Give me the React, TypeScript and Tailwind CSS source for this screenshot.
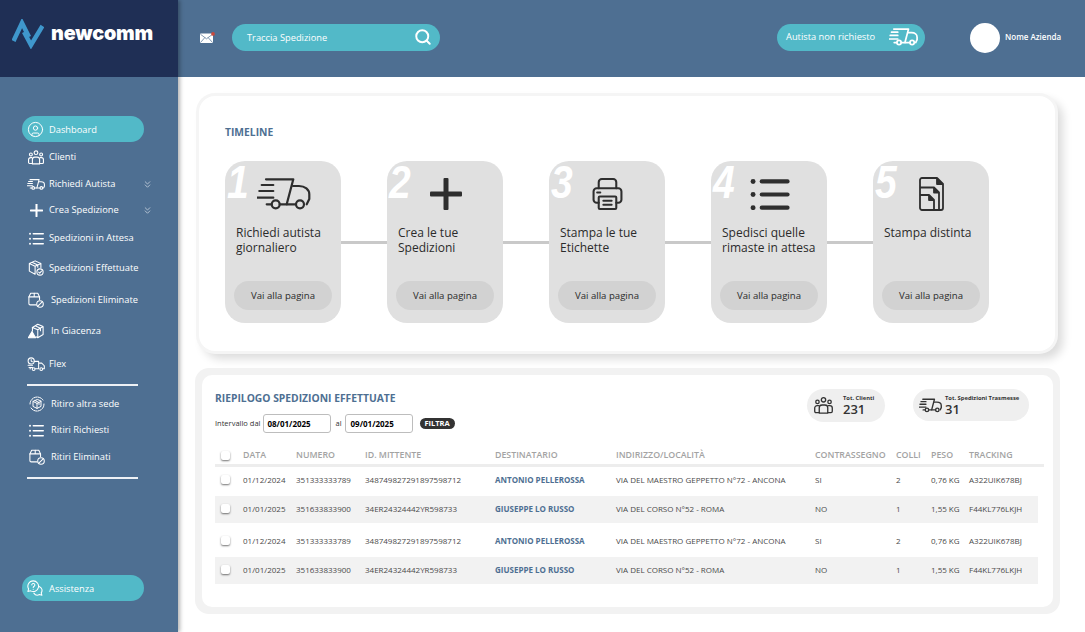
import { ChevronsDown, CircleUser, Search } from "lucide-react";

type IconProps = { className?: string };

function FastTruck({ className }: IconProps) {
  return (
    <svg viewBox="0 0 54 32" fill="none" stroke="currentColor" strokeWidth="2.2" strokeLinecap="round" strokeLinejoin="round" className={className}>
      <path d="M9 1.3h27.3l-6.6 25" />
      <path d="M36 8h6c6 0 10.3 3.5 10.3 8.3V21l-2.6 5.3" />
      <circle cx="18.7" cy="26.3" r="4" />
      <circle cx="43" cy="26.3" r="4" />
      <path d="M9.7 26.3h5M22.7 26.3H39M4.7 7h11.6M2.3 13h14M.3 19.7h16" />
    </svg>
  );
}

function ListIcon({ className }: IconProps) {
  return (
    <svg viewBox="0 0 38 31" fill="currentColor" className={className}>
      <circle cx="2.6" cy="3.3" r="2.4" />
      <circle cx="2.6" cy="16" r="2.4" />
      <circle cx="2.6" cy="28.7" r="2.4" />
      <rect x="9" y="1.3" width="29" height="4" rx="2" />
      <rect x="9" y="14" width="29" height="4" rx="2" />
      <rect x="9" y="26.7" width="29" height="4" rx="2" />
    </svg>
  );
}

function PlusIcon({ className }: IconProps) {
  return (
    <svg viewBox="0 0 32 32" fill="currentColor" className={className}>
      <rect x="13.5" y="0" width="5" height="32" rx="1" />
      <rect x="0" y="13.5" width="32" height="5" rx="1" />
    </svg>
  );
}

function PrinterIcon({ className }: IconProps) {
  return (
    <svg viewBox="0 0 29 31" fill="none" stroke="currentColor" strokeWidth="2" strokeLinecap="round" strokeLinejoin="round" className={className}>
      <path d="M6 10V4a3 3 0 0 1 3-3h11a3 3 0 0 1 3 3v6" />
      <path d="M6 24H4a3 3 0 0 1-3-3v-8a3 3 0 0 1 3-3h21a3 3 0 0 1 3 3v8a3 3 0 0 1-3 3h-2" />
      <rect x="6" y="18" width="17" height="12" rx="1" />
      <path d="M10.5 22h8M10.5 26h8M4.5 14h3" />
    </svg>
  );
}

function DocsIcon({ className }: IconProps) {
  return (
    <svg viewBox="0 0 25 34" fill="none" stroke="currentColor" strokeWidth="1.8" strokeLinejoin="round" className={className}>
      <path d="M3 1h15l6 6v24a2 2 0 0 1-2 2H3a2 2 0 0 1-2-2V3a2 2 0 0 1 2-2z" />
      <path d="M1 10.5h14l5 5V33" />
      <path d="M1 18h9l5 5v10" />
      <path d="M18 1v6h6M15 10.5v5h5M10 18v5h5" fill="currentColor" />
    </svg>
  );
}

function PeopleIcon({ className }: IconProps) {
  return (
    <svg viewBox="0 0 20 18" fill="none" stroke="currentColor" strokeWidth="1.4" strokeLinecap="round" strokeLinejoin="round" className={className}>
      <circle cx="10" cy="3" r="2.3" />
      <circle cx="3.6" cy="5.2" r="1.8" />
      <circle cx="16.4" cy="5.2" r="1.8" />
      <path d="M5.5 17v-5.5A3 3 0 0 1 8.5 8.5h3a3 3 0 0 1 3 3V17z" />
      <path d="M5.5 16.5H2a1.3 1.3 0 0 1-1.3-1.3v-3.5A2.5 2.5 0 0 1 3.2 9.2h1.6M14.5 16.5H18a1.3 1.3 0 0 0 1.3-1.3v-3.5a2.5 2.5 0 0 0-2.5-2.5h-1.6" />
    </svg>
  );
}

function BoxCheck({ className }: IconProps) {
  return (
    <svg viewBox="0 0 18 18" fill="none" stroke="currentColor" strokeWidth="1.2" strokeLinecap="round" strokeLinejoin="round" className={className}>
      <path d="M8 1 1.5 4v8.5L8 16M8 1l6.5 3v4.5M1.5 4 8 7l6.5-3M8 7v9M4.5 2.6 11 5.7v2.5" />
      <circle cx="13.5" cy="13.5" r="3.5" />
      <path d="m12 13.6 1.2 1.2 2-2.3" />
    </svg>
  );
}

function BoxBan({ className }: IconProps) {
  return (
    <svg viewBox="0 0 18 18" fill="none" stroke="currentColor" strokeWidth="1.2" strokeLinecap="round" strokeLinejoin="round" className={className}>
      <path d="M9 14.5H2.5A1.5 1.5 0 0 1 1 13V5.5L3 1.5h8l2 4v3" />
      <path d="M1 5.5h12M7 1.5v4" />
      <circle cx="13.5" cy="13.5" r="3.7" />
      <path d="m11 16 5-5" />
    </svg>
  );
}

function BoxAlert({ className }: IconProps) {
  return (
    <svg viewBox="0 0 18 18" fill="none" stroke="currentColor" strokeWidth="1.2" strokeLinecap="round" strokeLinejoin="round" className={className}>
      <path d="m5 5 6-3.5L17 4v9l-6 3.5-2-1M5 5l6 2.5L17 4M11 7.5v9M8 3.2l6 2.6v3" />
      <path d="M5 5v4" />
      <path d="M4.5 9.5 8.5 16.5H.5z" fill="currentColor" />
    </svg>
  );
}

function FlexTruck({ className }: IconProps) {
  return (
    <svg viewBox="0 0 20 16" fill="none" stroke="currentColor" strokeWidth="1.2" strokeLinecap="round" strokeLinejoin="round" className={className}>
      <circle cx="4.5" cy="4.5" r="3.5" />
      <path d="M4.5 2.8v1.9l1.3.8M8 5h5v8.5H9M13 7h3.5l3 3v3.5h-1.5M1 9.5h5M2 12h4M3 13.5h1" />
      <circle cx="7.3" cy="13.8" r="1.6" />
      <circle cx="16" cy="13.8" r="1.6" />
    </svg>
  );
}

function RoundBox({ className }: IconProps) {
  return (
    <svg viewBox="0 0 16 16" fill="none" stroke="currentColor" strokeWidth="1" strokeLinecap="round" strokeLinejoin="round" className={className}>
      <path d="M2 4.5A7.2 7.2 0 0 1 14 4M14.4 11A7.2 7.2 0 0 1 2 12" strokeDasharray="3 1" />
      <path d="M1 8a7 7 0 0 1 .5-2.5M15 8a7 7 0 0 1-.4 2.4" />
      <path d="M8 3.6 4 5.4v5L8 12.4l4-2v-5zM4 5.4l4 2 4-2M8 7.4v5M6 4.5l4 2v2" />
    </svg>
  );
}

function HelpChat({ className }: IconProps) {
  return (
    <svg viewBox="0 0 18 18" fill="none" stroke="currentColor" strokeWidth="1.2" strokeLinecap="round" strokeLinejoin="round" className={className}>
      <path d="M7 1a6 6 0 0 0-5.2 9L1 13l3-.8A6 6 0 1 0 7 1z" />
      <path d="M13.7 7.2a4.8 4.8 0 0 1 2.3 7.3l.8 2.7-2.8-.8a4.8 4.8 0 0 1-6.3-1.6" />
      <path d="M5.4 5.5a1.7 1.7 0 1 1 2.6 1.5c-.7.4-1 .8-1 1.5M7 10.4v.1" />
    </svg>
  );
}

function MailIcon({ className }: IconProps) {
  return (
    <svg viewBox="0 0 15 11" className={className}>
      <rect x="0" y="1.5" width="13" height="9.5" rx="0.8" fill="#fff" />
      <path d="M.5 2.3 6.5 6.8l6-4.5M.5 10.5l4.4-5M12.5 10.5l-4.4-5" fill="none" stroke="#4e6f92" strokeWidth="0.7" />
      <circle cx="13" cy="1.9" r="1.9" fill="#c8483c" />
    </svg>
  );
}

const thick = "stroke-[3.2]";

const navTop = [
  { label: "Clienti", icon: <PeopleIcon className="h-[15px] w-[16px]" />, row: "mt-[2px]", text: "", more: false },
  { label: "Richiedi Autista", icon: <FastTruck className={`h-[13px] w-[18px] ${thick}`} />, row: "mt-px", text: "", more: true },
  { label: "Crea Spedizione", icon: <PlusIcon className="h-[13px] w-[13px]" />, row: "", text: "", more: true },
  { label: "Spedizioni in Attesa", icon: <ListIcon className="h-[13px] w-[15px]" />, row: "mt-[2px]", text: "", more: false },
  { label: "Spedizioni Effettuate", icon: <BoxCheck className="h-[16px] w-[16px]" />, row: "mt-[4px]", text: "", more: false },
  { label: "Spedizioni Eliminate", icon: <BoxBan className="h-[16px] w-[16px]" />, row: "mt-[6px]", text: "ml-[2px]", more: false },
  { label: "In Giacenza", icon: <BoxAlert className="h-[16px] w-[16px]" />, row: "mt-[5px]", text: "ml-[2px]", more: false },
  { label: "Flex", icon: <FlexTruck className="h-[14px] w-[18px]" />, row: "mt-[7px]", text: "", more: false },
];

const navBottom = [
  { label: "Ritiro altra sede", icon: <RoundBox className="h-[16px] w-[16px]" />, row: "mt-[5px]" },
  { label: "Ritiri Richiesti", icon: <ListIcon className="h-[13px] w-[15px]" />, row: "mt-0" },
  { label: "Ritiri Eliminati", icon: <BoxBan className="h-[16px] w-[16px]" />, row: "mt-px" },
];

const steps = [
  { n: "1", title: "Richiedi autista giornaliero", icon: <FastTruck className="ml-[23px] h-[32px] w-[54px]" /> },
  { n: "2", title: "Crea le tue Spedizioni", icon: <PlusIcon className="ml-[34px] h-[32px] w-[32px]" /> },
  { n: "3", title: "Stampa le tue Etichette", icon: <PrinterIcon className="ml-[34px] h-[32px] w-[31px]" /> },
  { n: "4", title: "Spedisci quelle rimaste in attesa", icon: <ListIcon className="ml-[30px] h-[32px] w-[40px]" /> },
  { n: "5", title: "Stampa distinta", icon: <DocsIcon className="ml-[36px] h-[34px] w-[27px]" /> },
];

const rows = [
  { data: "01/12/2024", num: "351333333789", id: "348749827291897598712", dest: "ANTONIO PELLEROSSA", addr: "VIA DEL MAESTRO GEPPETTO N°72 - ANCONA", c: "SI", colli: "2", peso: "0,76 KG", track: "A322UIK678BJ", cls: "bg-white", mt: "mt-0" },
  { data: "01/01/2025", num: "351633833900", id: "34ER24324442YR598733", dest: "GIUSEPPE LO RUSSO", addr: "VIA DEL CORSO N°52 - ROMA", c: "NO", colli: "1", peso: "1,55 KG", track: "F44KL776LKJH", cls: "bg-[#f2f2f2]", mt: "mt-[2px]" },
  { data: "01/12/2024", num: "351333333789", id: "348749827291897598712", dest: "ANTONIO PELLEROSSA", addr: "VIA DEL MAESTRO GEPPETTO N°72 - ANCONA", c: "SI", colli: "2", peso: "0,76 KG", track: "A322UIK678BJ", cls: "bg-white", mt: "mt-[5px]" },
  { data: "01/01/2025", num: "351633833900", id: "34ER24324442YR598733", dest: "GIUSEPPE LO RUSSO", addr: "VIA DEL CORSO N°52 - ROMA", c: "NO", colli: "1", peso: "1,55 KG", track: "F44KL776LKJH", cls: "bg-[#f2f2f2]", mt: "mt-[2px]" },
];

const gridCols = "grid grid-cols-[28px_53px_69px_130px_121px_199px_81px_35px_38px_69px] items-center";

function Checkbox() {
  return <span className="ml-[6px] block h-[9px] w-[9px] rounded-[2px] bg-white shadow-[0_1px_2px_rgba(0,0,0,0.55)]" />;
}

export default function App() {
  return (
    <div className="flex h-[632px] w-[1085px] overflow-hidden bg-white font-['Open_Sans',sans-serif] text-[#333]">
      {/* colonna sinistra */}
      <aside className="z-10 flex w-[178px] shrink-0 flex-col bg-[#4e6f92] text-white shadow-[2px_0_4px_rgba(0,0,0,0.3)]">
        <div className="flex h-[77px] items-start bg-[#1f2f55] pl-[12px] pt-[19px]">
          <svg viewBox="0 0 32 30" className="h-[30px] w-[32px]" fill="none" stroke="#3f97cc" strokeWidth="4.5">
            <path d="M1.5 22 10 4l7 14" />
            <path d="M30.5 7 19 26l-7-13" />
          </svg>
          <span className="ml-[7px] mt-[1px] font-['Inter',sans-serif] text-[19.8px] font-black leading-[26px] tracking-[-0.2px]">newcomm</span>
        </div>

        <nav className="flex flex-1 flex-col pl-[22px] pt-[39px]">
          <div className="flex h-[26px] w-[122px] items-center rounded-full bg-[#52b9c8] pl-[5px] text-[9.3px]">
            <CircleUser className="h-[17px] w-[17px]" strokeWidth={1.4} />
            <span className="ml-[5px] pt-px">Dashboard</span>
          </div>
          {navTop.map((item) => (
            <div key={item.label} className={`flex h-[26px] w-[136px] items-center text-[9.3px] ${item.row}`}>
              <span className="flex w-[27px] shrink-0 items-center justify-center pl-[1px]">{item.icon}</span>
              <span className={item.text}>{item.label}</span>
              {item.more && <ChevronsDown className="ml-auto mr-[5px] h-[11px] w-[11px] text-[#d5dde6]" strokeWidth={1.6} />}
            </div>
          ))}
          <div className="ml-[5px] mt-[7px] h-[2px] w-[111px] bg-[#eef1f5]" />
          <div className="flex flex-col">
            {navBottom.map((item) => (
              <div key={item.label} className={`flex h-[26px] items-center text-[9.3px] ${item.row}`}>
                <span className="flex w-[29px] shrink-0 items-center justify-center">{item.icon}</span>
                <span>{item.label}</span>
              </div>
            ))}
          </div>
          <div className="ml-[5px] mt-[7px] h-[2px] w-[111px] bg-[#eef1f5]" />
          <div className="mt-[96px] flex h-[26px] w-[122px] items-center rounded-full bg-[#52b9c8] pl-[5px] text-[9.3px]">
            <HelpChat className="h-[16px] w-[16px]" />
            <span className="ml-[6px] pt-px">Assistenza</span>
          </div>
        </nav>
      </aside>

      <div className="flex min-w-0 flex-1 flex-col">
        {/* barra in alto */}
        <header className="flex h-[77px] items-center bg-[#4e6f92] pb-[3px] pl-[22px] text-white">
          <MailIcon className="h-[11px] w-[15px]" />
          <div className="ml-[17px] flex h-[27px] w-[208px] items-center justify-between rounded-full bg-[#52b9c8] pl-[15px] pr-[8px] text-[9.3px]">
            <span className="pt-px">Traccia Spedizione</span>
            <Search className="h-[18px] w-[18px]" strokeWidth={2.6} />
          </div>
          <div className="ml-[337px] flex h-[27px] w-[148px] items-center justify-between rounded-full bg-[#52b9c8] pl-[9px] pr-[7px] text-[9.3px]">
            <span>Autista non richiesto</span>
            <FastTruck className={`h-[18px] w-[29px] ${thick}`} />
          </div>
          <div className="ml-[45px] mt-px h-[30px] w-[30px] rounded-full bg-white" />
          <span className="ml-[5px] text-[8px] font-semibold">Nome Azienda</span>
        </header>

        <main className="flex flex-1 flex-col">
          {/* timeline */}
          <section className="ml-[21px] mt-[19px] h-[255px] w-[856px] rounded-[16px] bg-white pl-[26px] pt-[30px] shadow-[0_0_0_3px_#f5f5f5,6px_6px_10px_2px_rgba(0,0,0,0.14)]">
            <h2 className="text-[10.3px] font-bold leading-[13px] text-[#4e6f92]">TIMELINE</h2>
            <div className="mt-[22px] flex items-center">
              {steps.map((s, i) => (
                <div key={s.n} className="flex items-center">
                  {i > 0 && <div className="h-[3px] w-[46px] bg-[#c9c9c9]" />}
                  <div className="relative flex h-[162px] w-[116px] flex-col rounded-[20px] bg-[#e0e0e0] px-[9px] pb-[13px] pt-[16px]">
                    <span className="absolute left-[2px] top-[-5px] origin-left scale-x-[0.85] font-['Liberation_Sans',sans-serif] text-[46px] font-bold italic leading-[52px] text-white">{s.n}</span>
                    <div className="flex h-[34px] items-center text-[#2e2e2e]">{s.icon}</div>
                    <p className="mt-[14px] pl-[2px] text-[12px] leading-[15px] text-[#2b2b2b]">{s.title}</p>
                    <div className="mt-auto flex h-[29px] items-center justify-center rounded-full bg-[#d2d2d2] pt-px text-[9.6px] text-[#2b2b2b]">Vai alla pagina</div>
                  </div>
                </div>
              ))}
            </div>
          </section>

          {/* riepilogo */}
          <section className="ml-[17px] mt-[17px] h-[246px] w-[865px] rounded-[14px] bg-[#f2f2f2] p-[7px]">
            <div className="h-full rounded-[10px] bg-white pl-[13px]">
              <div className="flex items-start justify-between pr-[24px] pt-[14px]">
                <div>
                  <h2 className="mt-[3px] text-[10.3px] font-bold leading-[13px] text-[#4e6f92]">RIEPILOGO SPEDIZIONI EFFETTUATE</h2>
                  <div className="mt-[9px] flex items-center text-[7.5px]">
                    <span>Intervallo dal</span>
                    <span className="ml-[3px] flex h-[19px] w-[68px] items-center rounded-[3px] border border-[#bdbdbd] pl-[3px] text-[8px] font-bold text-black">08/01/2025</span>
                    <span className="ml-[4px]">al</span>
                    <span className="ml-[3px] flex h-[19px] w-[68px] items-center rounded-[3px] border border-[#bdbdbd] pl-[5px] text-[8px] font-bold text-black">09/01/2025</span>
                    <span className="ml-[7px] flex h-[11px] w-[35px] items-center justify-center rounded-full bg-[#333] text-[7.5px] font-bold text-white">FILTRA</span>
                  </div>
                </div>
                <div className="flex items-start">
                  <div className="flex h-[33px] w-[78px] items-center rounded-full bg-[#efefef] pl-[7px]">
                    <PeopleIcon className="h-[17px] w-[19px] text-[#333]" />
                    <div className="ml-[10px]">
                      <div className="text-[5.8px] font-bold leading-[7px]">Tot. Clienti</div>
                      <div className="text-[13px] font-semibold leading-[14px]">231</div>
                    </div>
                  </div>
                  <div className="ml-[28px] flex h-[32px] w-[116px] items-center rounded-full bg-[#efefef] pl-[6px]">
                    <FastTruck className={`h-[15px] w-[23px] text-[#333] ${thick}`} />
                    <div className="ml-[3px]">
                      <div className="text-[5.8px] font-bold leading-[7px]">Tot. Spedizioni Trasmesse</div>
                      <div className="text-[13px] font-semibold leading-[14px]">31</div>
                    </div>
                  </div>
                </div>
              </div>

              <div className="mt-[12px]">
                <div className={`${gridCols} h-[22px] w-[829px] border-b-[3px] border-[#ededed] pt-[2px] text-[8.8px] font-semibold text-[#a3a3a3]`}>
                  <Checkbox />
                  <span>DATA</span>
                  <span>NUMERO</span>
                  <span>ID. MITTENTE</span>
                  <span>DESTINATARIO</span>
                  <span>INDIRIZZO/LOCALITÀ</span>
                  <span>CONTRASSEGNO</span>
                  <span>COLLI</span>
                  <span>PESO</span>
                  <span>TRACKING</span>
                </div>
                {rows.map((r, i) => (
                  <div key={i} className={`${gridCols} h-[27px] pb-[2px] ${r.cls} ${r.mt} w-[823px] text-[8px] text-[#4a4a4a]`}>
                    <Checkbox />
                    <span>{r.data}</span>
                    <span>{r.num}</span>
                    <span>{r.id}</span>
                    <span className="font-bold text-[#4e6f92]">{r.dest}</span>
                    <span>{r.addr}</span>
                    <span>{r.c}</span>
                    <span>{r.colli}</span>
                    <span>{r.peso}</span>
                    <span>{r.track}</span>
                  </div>
                ))}
              </div>
            </div>
          </section>
        </main>
      </div>
    </div>
  );
}
